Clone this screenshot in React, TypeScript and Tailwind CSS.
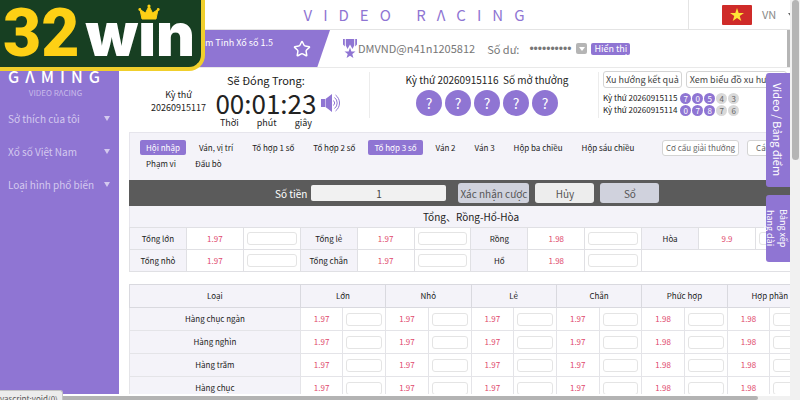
import { Star } from 'lucide-react';

const menuItems = ['Sở thích của tôi', 'Xổ số Việt Nam', 'Loại hình phổ biến'];

const betTabs = [
  'Hội nhập',
  'Ván, vị trí',
  'Tổ hợp 1 số',
  'Tổ hợp 2 số',
  'Tổ hợp 3 số',
  'Ván 2',
  'Ván 3',
  'Hộp ba chiều',
  'Hộp sáu chiều',
  'Phạm vi',
  'Đấu bò',
];
const activeTabs = ['Hội nhập', 'Tổ hợp 3 số'];

const sumRows = [
  [
    { name: 'Tổng lớn', odds: '1.97' },
    { name: 'Tổng lẻ', odds: '1.97' },
    { name: 'Rồng', odds: '1.98' },
    { name: 'Hòa', odds: '9.9' },
  ],
  [
    { name: 'Tổng nhỏ', odds: '1.97' },
    { name: 'Tổng chẵn', odds: '1.97' },
    { name: 'Hổ', odds: '1.98' },
  ],
];

const digitColumns = [
  { name: 'Lớn', odds: '1.97' },
  { name: 'Nhỏ', odds: '1.97' },
  { name: 'Lẻ', odds: '1.97' },
  { name: 'Chẵn', odds: '1.97' },
  { name: 'Phức hợp', odds: '1.98' },
  { name: 'Hợp phần', odds: '1.98' },
];
const digitRows = ['Hàng chục ngàn', 'Hàng nghìn', 'Hàng trăm', 'Hàng chục'];

const history = [
  { round: '20260915115', digits: [7, 0, 5, 4, 3] },
  { round: '20260915114', digits: [0, 7, 8, 7, 6] },
];

const BrandBanner = () => (
  <div className="absolute top-0 left-0 z-20 flex h-[71px] w-[205px] items-baseline rounded-br-2xl border-r-4 border-b-4 border-[#f0cf2c] bg-[#173f22]">
    <span className="pl-[3px] font-['Roboto'] text-[66px] leading-[67px] font-black text-[#fdd015]">32</span>
    <span className="relative pl-[6px] font-['Inter'] text-[60px] leading-[60px] font-black text-white">
      win
      <svg viewBox="0 0 22 16" className="absolute top-0 left-[58px] h-4 w-[22px]" aria-hidden="true">
        <path d="M0 0h22v16H0z" fill="#173f22" />
        <path
          d="M4 15 2 5.500 7.500 9 11 2l3.500 7L20 5.500 18 15z"
          fill="#fdd015"
          stroke="#fdd015"
          strokeLinejoin="round"
        />
        <circle cx="11" cy="2" r="1.600" fill="#fdd015" />
        <circle cx="1.800" cy="5.500" r="1.400" fill="#fdd015" />
        <circle cx="20.200" cy="5.500" r="1.400" fill="#fdd015" />
      </svg>
    </span>
  </div>
);

const Sidebar = () => (
  <aside className="flex w-[119px] shrink-0 flex-col bg-[#8f75d3] pt-[67px] text-white">
    <div className="pl-2 text-[16px] leading-[18px] font-medium tracking-[6px]">GΛMING</div>
    <div className="mt-[2px] pr-2 text-center text-[8px] leading-3 text-[#c9bbea]">VIDEO RΛCING</div>
    <nav className="mt-[3px] flex flex-col">
      {menuItems.map((item) => (
        <button key={item} className="flex h-[33px] w-full items-center justify-between pr-[9px] pl-2 text-[10px] text-[#d4c9ef]">
          {item}
          <span className="border-x-3 border-t-5 border-x-transparent border-t-[#d4c9ef]" />
        </button>
      ))}
    </nav>
  </aside>
);

const TopBar = () => (
  <header className="flex h-[30px] shrink-0 border-b border-[#e4e4e4]">
    <h1 className="flex-1 pl-8 text-center text-[15px] leading-[30px] tracking-[11px] text-[#8f75d3]">VIDEO RΛCING</h1>
    <div className="flex w-[102px] items-center border-l border-[#e4e4e4] pl-[33px]">
      <svg viewBox="0 0 30 20" className="h-5 w-[30px] shrink-0" role="img" aria-label="VN">
        <rect width="30" height="20" rx="1" fill="#cf2b29" />
        <path d="M15 3l1.700 5h5.300l-4.300 3.100 1.600 5-4.300-3.100-4.300 3.100 1.600-5L8 8h5.300z" fill="#ffe536" />
      </svg>
      <span className="pl-[10px] text-[11px] text-[#8a8a8a]">VN</span>
      <span className="ml-3 shrink-0 border-x-3 border-t-4 border-x-transparent border-t-[#666666]" />
    </div>
  </header>
);

const AccountBar = () => (
  <div className="flex h-[38px] shrink-0 border-b border-[#e9e9e9] text-[#777777]">
    <div className="flex w-[211px] justify-between bg-[#8f75d3] pr-[19px] pl-[86px] text-white [clip-path:polygon(0_0,100%_0,94%_100%,0_100%)]">
      <span className="pt-[5px] text-[9px] leading-4">m Tinh Xổ số 1.5</span>
      <button aria-label="Star" className="flex items-center">
        <Star size={18} strokeWidth={2} />
      </button>
    </div>
    <svg viewBox="0 0 16 22" className="mt-2 ml-3 h-[22px] w-4" fill="#8f75d3" aria-hidden="true">
      <path d="M1 1h1.800v7.500L1 6.500zM13.200 1H15v5.500l-1.800 2z" />
      <path d="M3.800 1h8.400v6.500L10.500 11 8 6.500 5.500 11 3.800 7.500z" />
      <path d="M8 9.500l1.400 3.900 4.100.1-3.200 2.500 1.100 4L8 17.700 4.600 20l1.100-4-3.200-2.500 4.100-.1z" />
    </svg>
    <span className="text-[11px] leading-[36px]">DMVND@n41n1205812</span>
    <span className="ml-3 text-[11px] leading-[38px]">Số dư:</span>
    <span className="ml-[10px] font-['Liberation_Sans'] text-[12px] leading-[38px]">••••••••••</span>
    <div className="ml-[5px] flex items-center gap-1">
      <button aria-label="VND" className="flex h-[11px] w-[11px] items-center justify-center rounded-[2px] bg-[#b5b5b5]">
        <span className="border-x-3 border-t-4 border-x-transparent border-t-white" />
      </button>
      <button className="h-3 rounded-[2px] bg-[#8f75d3] px-[3px] text-[9px] leading-3 text-white">Hiển thị</button>
    </div>
    <div className="ml-auto w-[3px] bg-[#b5b5b5]" />
  </div>
);

const RoundInfo = () => (
  <section className="flex h-16 shrink-0 whitespace-nowrap">
    <div className="flex w-[250px] shrink-0 pl-8">
      <div className="pt-5 text-center text-[9px] leading-[13px]">
        Kỳ thứ
        <br />
        20260915117
      </div>
      <div className="ml-2 w-[104px] pt-1 text-center">
        <div className="text-[11px] leading-4">Sẽ Đóng Trong:</div>
        <div className="text-[26px] leading-[30px]">00:01:23</div>
        <div className="flex justify-between px-[6px] text-[9px] leading-[10px]">
          <span>Thời</span>
          <span>phút</span>
          <span>giây</span>
        </div>
      </div>
      <button aria-label="Âm thanh" className="mt-[7px] ml-[2px] flex h-14 items-center">
        <svg viewBox="0 0 21 20" className="h-5 w-[21px]" fill="none" stroke="#8f75d3">
          <path d="M1 6h4v8H1zM5.500 6 12 1v18l-6.500-5z" fill="#8f75d3" stroke="none" />
          <path d="M13.500 7.500a3.500 3.500 0 0 1 0 5M14.500 4.500a7 7 0 0 1 0 11M15.500 2a10 10 0 0 1 0 16" />
        </svg>
      </button>
    </div>
    <div className="mt-1 h-[46px] w-[230px] shrink-0 border-x border-[#ececec] pl-[6px] text-center">
      <div className="text-[10px] leading-4">
        Kỳ thứ 20260915116 &nbsp;Số mở thưởng
      </div>
      <div className="mt-[2px] flex justify-center gap-[3px]">
        {[0, 1, 2, 3, 4].map((n) => (
          <span key={n} className="size-[26px] rounded-full bg-[#8f75d3] text-[14px] leading-[26px] text-white">
            ?
          </span>
        ))}
      </div>
    </div>
    <div className="pt-[3px] pl-1">
      <div className="flex gap-1 text-[9px] text-[#444444]">
        <button className="h-[17px] rounded-[3px] border border-[#d4d4d4] px-[2px]">Xu hướng kết quả</button>
        <button className="h-[17px] rounded-[3px] border border-[#d4d4d4] px-[3px]">Xem biểu đồ xu hướng</button>
      </div>
      <div className="pt-1">
        {history.map((row) => (
          <div key={row.round} className="flex h-3 items-center gap-px text-[8px]">
            <span className="pr-[2px]">Kỳ thứ {row.round}</span>
            {row.digits.map((d, i) => (
              <span
                key={i}
                className={
                  i < 3
                    ? 'size-[11px] rounded-full bg-[#8f75d3] text-center leading-[11px] text-white'
                    : 'size-[11px] rounded-full bg-[#d9d9d9] text-center leading-[11px] text-[#666666]'
                }
              >
                {d}
              </span>
            ))}
          </div>
        ))}
      </div>
    </div>
  </section>
);

const TabPanel = () => (
  <section className="flex h-12 border border-b-0 border-[#e6e5ec] bg-[#f4f3f9] pt-[7px] pl-[10px] whitespace-nowrap">
    <div className="flex w-[510px] flex-wrap content-start gap-x-[7px] gap-y-px">
      {betTabs.map((tab) => (
        <button
          key={tab}
          className={
            activeTabs.includes(tab)
              ? 'h-[15px] rounded-[2px] bg-[#8f75d3] px-[6px] leading-[15px] text-white'
              : 'h-[15px] px-[6px] leading-[15px]'
          }
        >
          {tab}
        </button>
      ))}
    </div>
    <div className="flex items-start gap-2 pl-3 text-[#666666]">
      <button className="h-4 rounded-[3px] border border-[#d4d4d4] bg-white px-[3px]">Cơ cấu giải thưởng</button>
      <button className="h-4 rounded-[3px] border border-[#d4d4d4] bg-white px-2">Cách chơi</button>
    </div>
  </section>
);

const StakeBar = () => (
  <form className="flex h-[26px] items-center bg-[#5b5b5b] pl-[146px] text-[10px]">
    <label htmlFor="stake" className="whitespace-nowrap text-white">
      Số tiền
    </label>
    <input id="stake" defaultValue="1" className="mr-3 ml-1 h-4 w-[135px] rounded-[2px] bg-[#f1f1f1] text-center text-[#444444]" />
    <div className="flex gap-[6px] text-[#555555]">
      <button type="button" className="h-5 w-[71px] rounded-[3px] bg-[#d0d2dd] whitespace-nowrap">Xác nhận cược</button>
      <button type="button" className="h-5 w-[59px] rounded-[3px] bg-[#ededed]">Hủy</button>
      <button type="button" className="h-5 w-[59px] rounded-[3px] bg-[#d0d2dd]">Sổ</button>
    </div>
  </form>
);

const BetInput = ({ label }: { label: string }) => (
  <input aria-label={label} className="mx-auto block h-[13px] w-[calc(100%-6px)] rounded-[3px] border border-[#e4e4e4] bg-white" />
);

const SumTable = () => (
  <table className="w-full table-fixed border-collapse border border-[#e0e0e4] text-center">
    <caption className="h-[21px] border-x border-[#e6e5ec] bg-[#f4f3f9] text-[10px] leading-[21px]">Tổng、Rồng-Hổ-Hòa</caption>
    <tbody>
      {sumRows.map((row, r) => (
        <tr key={r} className="h-[22px]">
          {row.map((bet) => [
            <th key="name" className="border border-[#e0e0e4] bg-[#f4f3f9] p-0 font-normal">{bet.name}</th>,
            <td key="odds" className="border border-[#e0e0e4] p-0 text-[#e0486c]">{bet.odds}</td>,
            <td key="input" className="border border-[#e0e0e4] p-0">
              <BetInput label={bet.name} />
            </td>,
          ])}
          {row.length < 4 && <td colSpan={3} />}
        </tr>
      ))}
    </tbody>
  </table>
);

const DigitTable = () => (
  <table className="mt-3 w-full table-fixed border-collapse border border-[#d9d9df] text-center">
    <colgroup>
      <col className="w-1/4" />
      {digitColumns.map((col) => [<col key="odds" />, <col key="input" />])}
    </colgroup>
    <thead>
      <tr className="h-[23px] bg-[#f4f3f9]">
        <th className="border border-[#d9d9df] p-0 font-normal">Loại</th>
        {digitColumns.map((col) => (
          <th key={col.name} colSpan={2} className="border border-[#d9d9df] p-0 font-normal">
            {col.name}
          </th>
        ))}
      </tr>
    </thead>
    <tbody>
      {digitRows.map((row) => (
        <tr key={row} className="h-[23px]">
          <th className="border border-[#e4e4e8] bg-[#f4f3f9] p-0 font-normal">{row}</th>
          {digitColumns.map((col) => [
            <td key="odds" className="border border-l-[#d9d9df] border-[#e4e4e8] p-0 text-[#e0486c]">{col.odds}</td>,
            <td key="input" className="border border-[#e4e4e8] p-0">
              <BetInput label={`${row} ${col.name}`} />
            </td>,
          ])}
        </tr>
      ))}
    </tbody>
  </table>
);

export default function App() {
  return (
    <div className="relative flex h-screen overflow-hidden bg-white font-['Noto_Sans_CJK_SC',sans-serif] text-[#222222]">
      <BrandBanner />
      <div className="relative flex min-w-0 flex-1 flex-col">
        <div className="flex min-h-0 flex-1 overflow-hidden">
          <Sidebar />
          <main className="flex min-w-0 flex-1 flex-col">
            <TopBar />
            <AccountBar />
            <RoundInfo />
            <div className="ml-[10px] w-[684px] text-[8px]">
              <TabPanel />
              <StakeBar />
              <SumTable />
              <DigitTable />
            </div>
          </main>
        </div>
        <div className="mt-[2px] h-1 w-full shrink-0 bg-[#f1f1f1]">
          <div className="h-full w-[96%] rounded-r-sm bg-[#b3b3b3]" />
        </div>
        <div className="absolute top-[73px] right-0 flex w-6 flex-col gap-2 text-white">
          <button className="h-[114px] w-6 rounded-l-[3px] bg-[#8f75d3] text-[11px] leading-6 [writing-mode:vertical-rl]">
            Video / Bảng điểm
          </button>
          <button className="h-[67px] w-6 rounded-l-[3px] bg-[#8f75d3] text-[9px] leading-[13px] [writing-mode:vertical-rl]">
            Bảng xếp
            <br />
            hạng dài
          </button>
        </div>
      </div>
      <div className="w-[10px] shrink-0 bg-[#f1f1f1] pr-px pl-[2px]">
        <div className="h-[40%] rounded-full bg-[#b5b5b5]" />
      </div>
      <div className="absolute bottom-0 left-0 z-20 h-[10px] rounded-tr-[3px] border-t border-r border-[#c4c4c4] bg-[#ececec] pr-1 text-[8px] leading-4 text-[#555555]">
        vascript:void(0)
      </div>
    </div>
  );
}
